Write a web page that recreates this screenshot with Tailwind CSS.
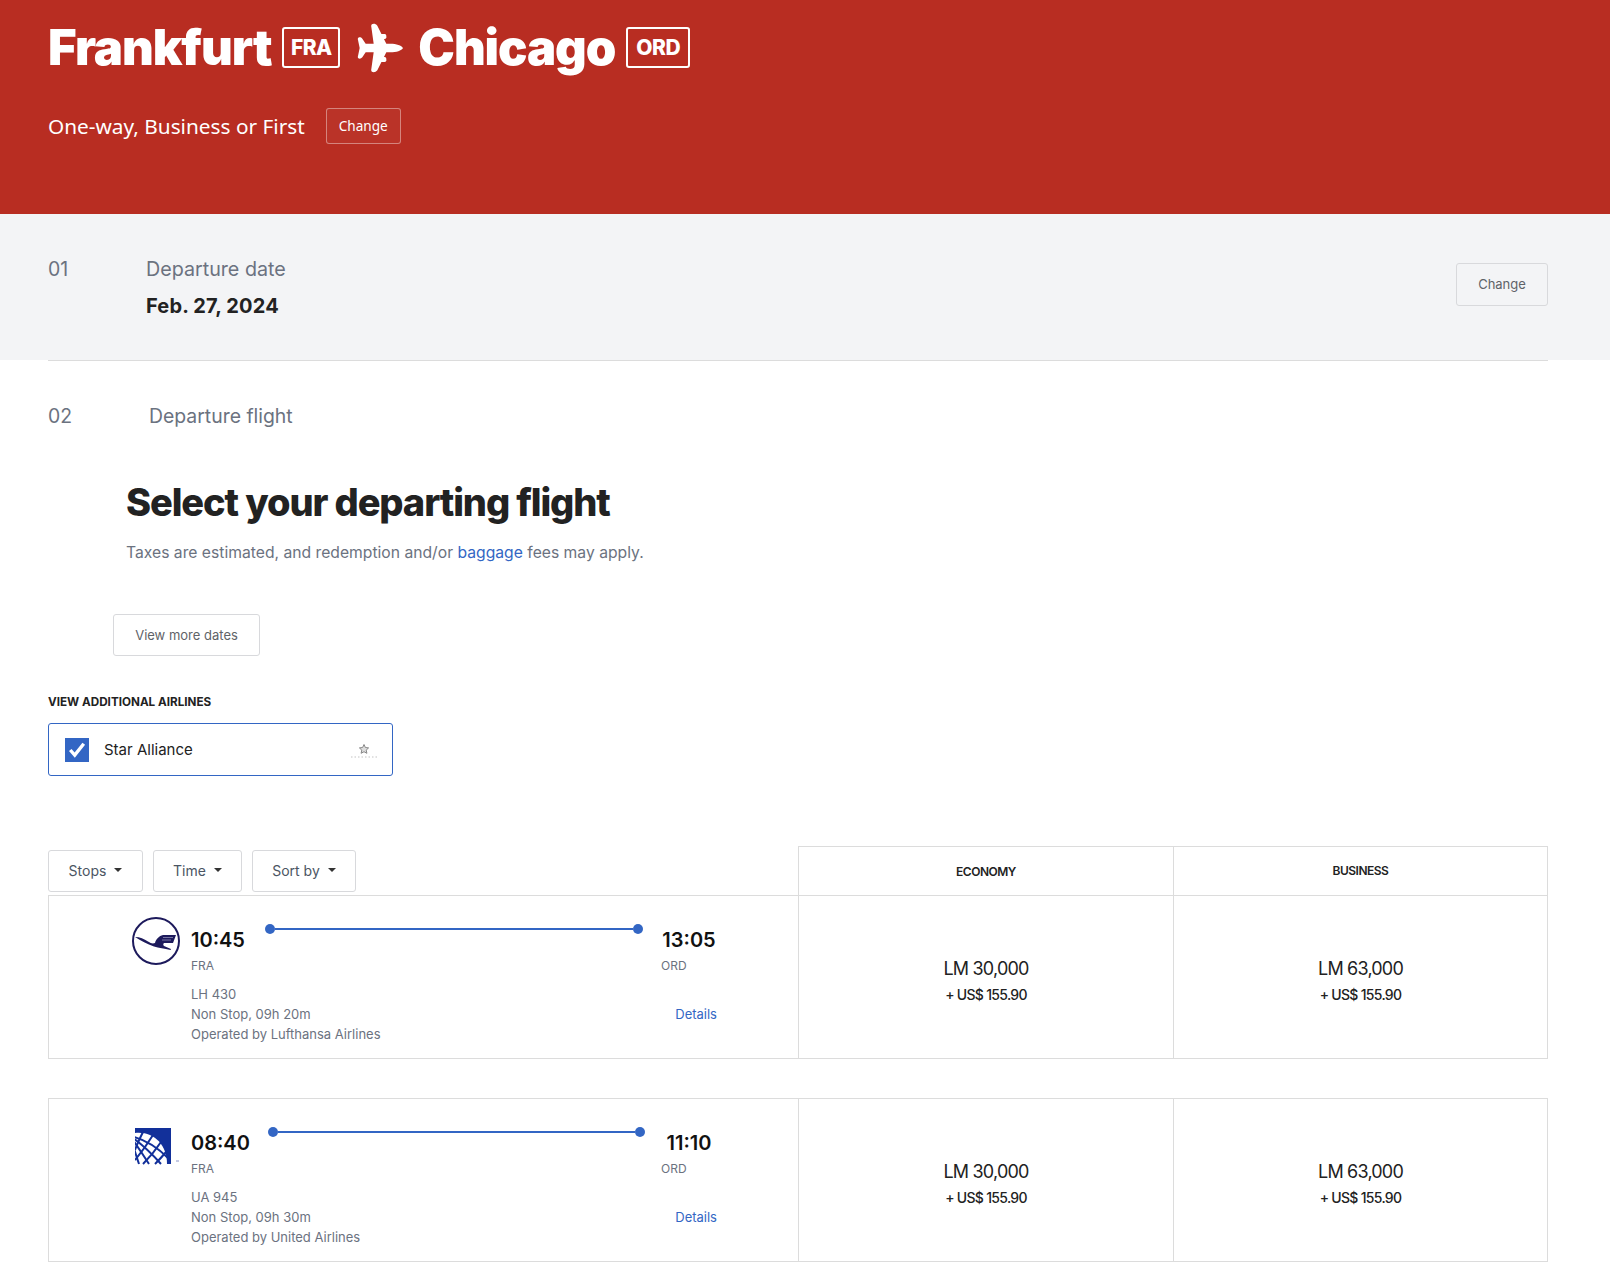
<!doctype html>
<html>
<head>
  <meta charset="UTF-8">
  <title>Frankfurt to Chicago</title>
  <script src="https://cdn.jsdelivr.net/npm/@tailwindcss/browser@4"></script>
</head>
<body class="bg-white font-['Inter',sans-serif] text-[#222]">

  <!-- route header -->
  <header class="h-[214px] bg-[#b82d22] text-white pl-[48px] pt-[19px]">
    <div class="flex items-center h-[57px]">
      <span class="text-[49px] font-black tracking-[-1.1px] leading-none">Frankfurt</span>
      <span class="ml-[11px] w-[58px] h-[41px] flex items-center justify-center border-2 border-white rounded-[3px] text-[21px] font-extrabold tracking-[-0.5px]">FRA</span>
      <svg class="ml-[16px] w-[48px] h-[50px]" viewBox="50 25 142 150" fill="#fff">
        <path d="M190 100C186 92 170 87 152 87L140 87 113 33C106 24 92 26 95 37L102 87 78 87 68 72C62 65 52 68 55 76L60 100 55 124C52 132 62 135 68 128L78 113 102 113 95 163C92 174 106 176 113 167L140 113 152 113C170 113 186 108 190 100Z"/>
        <rect x="120" y="58" width="20" height="15" rx="5"/>
        <rect x="120" y="127" width="20" height="15" rx="5"/>
      </svg>
      <span class="ml-[14px] text-[49px] font-black tracking-[-1.1px] leading-none">Chicago</span>
      <span class="ml-[11px] w-[64px] h-[41px] flex items-center justify-center border-2 border-white rounded-[3px] text-[21px] font-extrabold tracking-[-0.5px]">ORD</span>
    </div>
    <div class="flex items-center mt-[32px]">
      <span class="text-[20.8px] leading-[36px] font-['Noto_Sans',sans-serif]">One-way, Business or First</span>
      <button class="ml-[21px] w-[75px] h-[36px] bg-white/[0.03] border border-white/40 rounded-[3px] text-[13.6px] font-['Noto_Sans',sans-serif]">Change</button>
    </div>
  </header>

  <!-- step 01 -->
  <section class="h-[146px] bg-[#f3f4f6] pl-[48px] pr-[62px] flex items-start justify-between">
    <div class="flex text-[#6b7280] pt-[41px]">
      <span class="w-[98px] text-[19.5px] leading-[28px]">01</span>
      <div>
        <p class="text-[19.7px] leading-[28px]">Departure date</p>
        <p class="mt-[9px] text-[20px] leading-[28px] font-bold tracking-[0.15px] text-[#222]">Feb. 27, 2024</p>
      </div>
    </div>
    <button class="mt-[49px] w-[92px] h-[43px] border border-[#d8d9dc] rounded-[3px] text-[13px] text-[#5f6368]">Change</button>
  </section>

  <div class="ml-[48px] mr-[62px] border-t border-[#dcdcdc]"></div>

  <!-- step 02 -->
  <section class="px-[48px] pt-[41px] pb-[70px]">
    <div class="flex text-[#6b7280] text-[19.4px] leading-[28px]">
      <span class="w-[101px]">02</span>
      <span>Departure flight</span>
    </div>
    <h1 class="ml-[78px] mt-[48px] text-[38px] leading-[48px] font-extrabold tracking-[-1.1px] text-[#222]">Select your departing flight</h1>
    <p class="ml-[78px] mt-[15px] text-[15.7px] leading-[24px] text-[#6b7280]">Taxes are estimated, and redemption and/or <a class="text-[#3366c4]">baggage</a> fees may apply.</p>
    <button class="block ml-[65px] mt-[49px] w-[147px] h-[42px] pt-[2px] border border-[#d8d9dc] rounded-[3px] text-[13px] text-[#5f6368]">View more dates</button>
    <p class="mt-[38px] text-[11.7px] leading-[16px] font-bold text-[#222]">VIEW ADDITIONAL AIRLINES</p>
    <label class="mt-[13px] w-[345px] h-[53px] flex items-center border border-[#3366c4] rounded-[3px] pl-[16px] pr-[14px]">
      <span class="w-[24px] h-[24px] bg-[#3366c4] flex items-center justify-center">
        <svg class="w-[18px] h-[18px]" viewBox="0 0 16 16" fill="none" stroke="#fff" stroke-width="3"><path d="M2 8l4 4.5 8-10"/></svg>
      </span>
      <span class="ml-[15px] pt-[2px] text-[15px] flex-1">Star Alliance</span>
      <svg class="w-[28px] h-[16px] mt-[2px]" viewBox="0 0 28 16">
        <path d="M14 1.5l1.4 3 3.2.4-2.4 2.2.7 3.2-2.9-1.6-2.9 1.6.7-3.2-2.4-2.2 3.2-.4z" fill="#ddd" stroke="#888" stroke-width="1"/>
        <path d="M1 14h26" stroke="#aaa" stroke-width="0.7" stroke-dasharray="1.5 2"/>
      </svg>
    </label>
  </section>

  <!-- flights -->
  <section class="ml-[48px] w-[1500px]">
    <div class="flex h-[49px] items-start">
      <div class="w-[750px] flex gap-[10px] pt-[4px]">
        <button class="w-[95px] h-[42px] pb-[2px] border border-[#d8d9dc] rounded-[3px] text-[14px] text-[#4b5563] flex items-center justify-center gap-[8px]">Stops<span class="border-x-[4px] border-x-transparent border-t-[4px] border-t-[#333]"></span></button>
        <button class="w-[89px] h-[42px] pb-[2px] border border-[#d8d9dc] rounded-[3px] text-[14px] text-[#4b5563] flex items-center justify-center gap-[8px]">Time<span class="border-x-[4px] border-x-transparent border-t-[4px] border-t-[#333]"></span></button>
        <button class="w-[104px] h-[42px] pb-[2px] border border-[#d8d9dc] rounded-[3px] text-[14px] text-[#4b5563] flex items-center justify-center gap-[8px]">Sort by<span class="border-x-[4px] border-x-transparent border-t-[4px] border-t-[#333]"></span></button>
      </div>
      <div class="w-[375px] h-[49px] pt-[2px] border-l border-t border-[#dcdcdc] flex items-center justify-center text-[12px] font-semibold tracking-[-0.5px]">ECONOMY</div>
      <div class="w-[375px] h-[49px] border-x border-t border-[#dcdcdc] flex items-center justify-center text-[12px] font-semibold tracking-[-0.5px]">BUSINESS</div>
    </div>

    <!-- LH 430 -->
    <article class="flex h-[164px] border border-[#dcdcdc]">
      <div class="w-[749px] flex pl-[83px] pr-[82px] pt-[21px]">
        <svg class="w-[48px] h-[48px] shrink-0" viewBox="0 0 48 48">
          <circle cx="24" cy="24" r="23" fill="none" stroke="#1d1a5c" stroke-width="2"/>
          <path d="M3 20C8 20 12 22 16 24.5 19 26.5 21 27 23 26 24 22 27 19 31 18H44L41 26H32C31 27 31 28 32 29L39 32 38.5 33C32 31.5 27 31 22 29.5 15 27 9 24 3 20Z" fill="#1d1a5c"/>
          <path d="M31 20.5h10M30 23h9" stroke="#8f8db5" stroke-width="0.8"/>
        </svg>
        <div class="ml-[11px] flex-1 flex flex-col">
          <div class="flex">
            <div class="w-[54px]">
              <p class="mt-[9px] text-[20px] leading-[28px] font-semibold text-[#111] whitespace-nowrap">10:45</p>
            </div>
            <div class="ml-[20px] mt-[6px] w-[378px] h-[12px] flex items-center">
              <span class="w-[10px] h-[10px] rounded-full bg-[#3366c4]"></span>
              <span class="flex-1 h-[2px] bg-[#3366c4]"></span>
              <span class="w-[10px] h-[10px] rounded-full bg-[#3366c4]"></span>
            </div>
            <div class="ml-[18px] w-[56px] shrink-0 text-center">
              <p class="mt-[9px] text-[20px] leading-[28px] font-semibold text-[#111]">13:05</p>
            </div>
          </div>
          <div class="flex justify-between mt-[4px] text-[12px] leading-[16px] text-[#6b7280]">
            <span>FRA</span><span class="w-[56px]">ORD</span>
          </div>
          <div class="flex justify-between items-end mt-[10px] text-[13px] leading-[20px] text-[#6b7280]">
            <div>
              <p>LH 430</p>
              <p>Non Stop, 09h 20m</p>
              <p>Operated by Lufthansa Airlines</p>
            </div>
            <a class="text-[#3366c4] mb-[20px]">Details</a>
          </div>
        </div>
      </div>
      <div class="w-[375px] pt-[7px] border-l border-[#dcdcdc] flex flex-col items-center justify-center">
        <p class="text-[18px] leading-[28px] tracking-[-0.8px]">LM 30,000</p>
        <p class="text-[14px] leading-[24px] font-medium tracking-[-0.7px]">+ US$ 155.90</p>
      </div>
      <div class="flex-1 pt-[7px] border-l border-[#dcdcdc] flex flex-col items-center justify-center">
        <p class="text-[18px] leading-[28px] tracking-[-0.8px]">LM 63,000</p>
        <p class="text-[14px] leading-[24px] font-medium tracking-[-0.7px]">+ US$ 155.90</p>
      </div>
    </article>

    <!-- UA 945 -->
    <article class="flex h-[164px] mt-[39px] border border-[#dcdcdc]">
      <div class="w-[749px] flex pl-[86px] pr-[82px] pt-[29px]">
        <svg class="w-[46px] h-[37px] shrink-0" viewBox="0 0 46 37">
          <rect x="0" y="0" width="36" height="36" fill="#12309a"/>
          <path d="M0 5C18 3 32 16 32 36H0Z" fill="#fff"/>
          <g stroke="#12309a" fill="none" stroke-width="2">
            <path d="M-5 8Q15 12 33 30"/>
            <path d="M-5 8Q10 18 26 36"/>
            <path d="M-5 8Q5 22 14 36"/>
            <path d="M-5 8Q0 24 4 36"/>
            <path d="M8 4Q2 16 0 22"/>
            <path d="M18 7Q10 20 0 32"/>
            <path d="M26 14Q18 26 8 36"/>
            <path d="M31 24Q26 30 20 36"/>
          </g>
          <path d="M41 33h3" stroke="#8a94c8" stroke-width="1"/>
        </svg>
        <div class="ml-[10px] flex-1 flex flex-col mt-[-8px]">
          <div class="flex">
            <div class="w-[57px]">
              <p class="mt-[9px] text-[20px] leading-[28px] font-semibold text-[#111] whitespace-nowrap">08:40</p>
            </div>
            <div class="ml-[20px] mt-[6px] w-[377px] h-[12px] flex items-center">
              <span class="w-[10px] h-[10px] rounded-full bg-[#3366c4]"></span>
              <span class="flex-1 h-[2px] bg-[#3366c4]"></span>
              <span class="w-[10px] h-[10px] rounded-full bg-[#3366c4]"></span>
            </div>
            <div class="ml-[16px] w-[56px] shrink-0 text-center">
              <p class="mt-[9px] text-[20px] leading-[28px] font-semibold text-[#111]">11:10</p>
            </div>
          </div>
          <div class="flex justify-between mt-[4px] text-[12px] leading-[16px] text-[#6b7280]">
            <span>FRA</span><span class="w-[56px]">ORD</span>
          </div>
          <div class="flex justify-between items-end mt-[10px] text-[13px] leading-[20px] text-[#6b7280]">
            <div>
              <p>UA 945</p>
              <p>Non Stop, 09h 30m</p>
              <p>Operated by United Airlines</p>
            </div>
            <a class="text-[#3366c4] mb-[20px]">Details</a>
          </div>
        </div>
      </div>
      <div class="w-[375px] pt-[7px] border-l border-[#dcdcdc] flex flex-col items-center justify-center">
        <p class="text-[18px] leading-[28px] tracking-[-0.8px]">LM 30,000</p>
        <p class="text-[14px] leading-[24px] font-medium tracking-[-0.7px]">+ US$ 155.90</p>
      </div>
      <div class="flex-1 pt-[7px] border-l border-[#dcdcdc] flex flex-col items-center justify-center">
        <p class="text-[18px] leading-[28px] tracking-[-0.8px]">LM 63,000</p>
        <p class="text-[14px] leading-[24px] font-medium tracking-[-0.7px]">+ US$ 155.90</p>
      </div>
    </article>
  </section>

</body>
</html>
